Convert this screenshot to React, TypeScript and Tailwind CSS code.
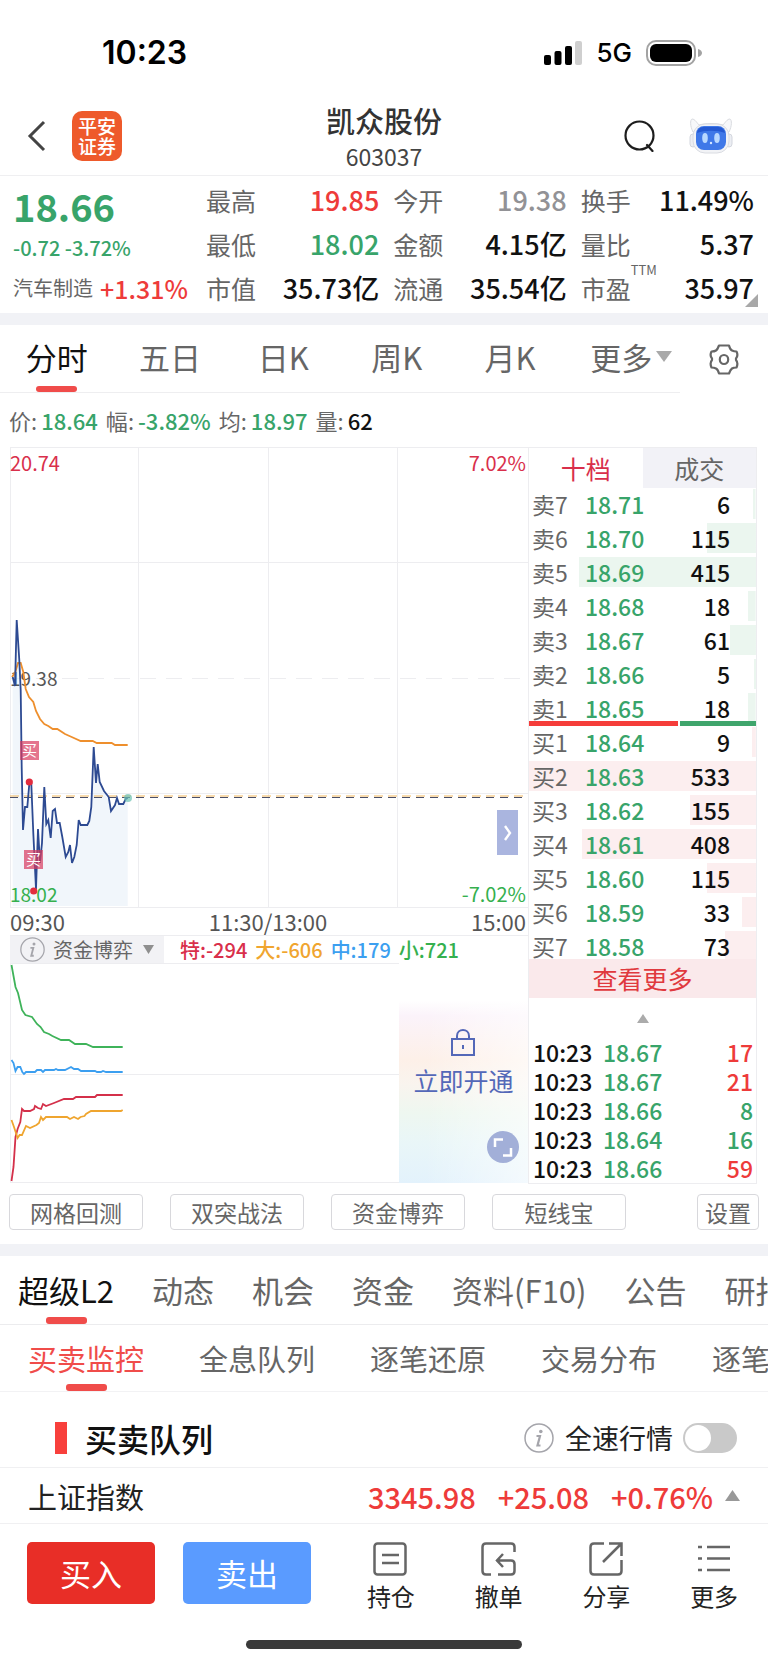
import { useState } from 'react';
import clsx from 'clsx';

const MAX_QTY = 533;

const stats = [
  { label: '最高', value: '19.85', color: 'text-[#ee3b3a]' },
  { label: '今开', value: '19.38', color: 'text-[#929296]' },
  { label: '换手', value: '11.49%', color: 'text-[#111]' },
  { label: '最低', value: '18.02', color: 'text-[#38a46a]' },
  { label: '金额', value: '4.15亿', color: 'text-[#111]' },
  { label: '量比', value: '5.37', color: 'text-[#111]' },
  { label: '市值', value: '35.73亿', color: 'text-[#111]' },
  { label: '流通', value: '35.54亿', color: 'text-[#111]' },
  { label: '市盈', value: '35.97', color: 'text-[#111]', sup: 'TTM' },
];

const periods = ['分时', '五日', '日K', '周K', '月K', '更多'];

const quote = [
  { label: '价', value: '18.64', color: 'text-[#38a46a]' },
  { label: '幅', value: '-3.82%', color: 'text-[#38a46a]' },
  { label: '均', value: '18.97', color: 'text-[#38a46a]' },
  { label: '量', value: '62', color: 'text-[#111]' },
];

const sells = [
  { name: '卖7', price: '18.71', qty: 6 },
  { name: '卖6', price: '18.70', qty: 115 },
  { name: '卖5', price: '18.69', qty: 415 },
  { name: '卖4', price: '18.68', qty: 18 },
  { name: '卖3', price: '18.67', qty: 61 },
  { name: '卖2', price: '18.66', qty: 5 },
  { name: '卖1', price: '18.65', qty: 18 },
];

const buys = [
  { name: '买1', price: '18.64', qty: 9 },
  { name: '买2', price: '18.63', qty: 533 },
  { name: '买3', price: '18.62', qty: 155 },
  { name: '买4', price: '18.61', qty: 408 },
  { name: '买5', price: '18.60', qty: 115 },
  { name: '买6', price: '18.59', qty: 33 },
  { name: '买7', price: '18.58', qty: 73 },
];

const trades = [
  { time: '10:23', price: '18.67', qty: 17, up: true },
  { time: '10:23', price: '18.67', qty: 21, up: true },
  { time: '10:23', price: '18.66', qty: 8, up: false },
  { time: '10:23', price: '18.64', qty: 16, up: false },
  { time: '10:23', price: '18.66', qty: 59, up: true },
];

const flows = [
  { text: '特:-294', color: 'text-[#d92f4b]' },
  { text: '大:-606', color: 'text-[#f0a52f]' },
  { text: '中:179', color: 'text-[#3c9ff0]' },
  { text: '小:721', color: 'text-[#35b04e]' },
];

const tools = ['网格回测', '双突战法', '资金博弈', '短线宝'];
const sections = ['超级L2', '动态', '机会', '资金', '资料(F10)', '公告', '研报'];
const subSections = ['买卖监控', '全息队列', '逐笔还原', '交易分布', '逐笔成交'];

const priceLine =
  '2.7,230 5,239 6.7,173 9.3,213 10.7,243 11.7,320 13,383 15,360 17.3,360 19.3,337 21.3,337 23.3,386 26,442 28,382 30,416 32,396 34.3,340 36.3,377 38.3,373 40.7,391 42.7,364 45,362 47,376 49.7,376 52.3,390 55.7,410 58.3,405 60,398 62,416 64.3,410 66.7,398 68.7,373 70.7,378 77.3,378 79.3,374 81.3,360 83.7,300 86,336 87.7,317 89.7,335 94,344 98.7,350 101,364 105,358 107,351 109,357 113.3,357 115.7,352 117.7,351';
const avgLine =
  '2,230 5.3,225 8,216 10.7,216 13.3,225 15.7,242 19,250 23.3,255 26,264 30,272 34.3,277 38.3,279 42.7,282 47.3,282 55,287 61.7,290 70.7,294 82.7,294 86.7,296 101.7,296 105,298 117.7,298';

const flowLines = [
  {
    color: '#3fb35a',
    points:
      '1.5,2 5.5,24 8,30 12,47 15.4,52 22,54 27,61 30.6,64 34,69 39,71 42.4,73 51,77 59,77 65,81 76,81 83,84 112.7,84',
  },
  {
    color: '#3c9ff0',
    points:
      '1.5,97 3.5,100 5.5,108 7.6,104 10.3,104 12.3,109 14,111 16,109 25,109 27,107 31,107 33,109 35,107 44,107 46,106 48,107 55,107 61,104 64,106 68,106 71,108 85,108 87,109 91,109 93,108 96,109 112.7,109',
  },
  {
    color: '#d4304a',
    points:
      '1.5,218 3.5,204 5.5,174 7.6,166 10.3,159 12,146 14,148 20,148 24,146 25,143 28,145 31,146 33,141 36,143 44,140 54,136 63,136 66,134 85,134 87,132 112.7,132',
  },
  {
    color: '#efa52f',
    points:
      '1.5,157 4,164 7.6,175 9.6,172 12,172 16,163 20,165 26.5,162 29,160 31,154 33,157 36,154 57,154 60,156 64,154 68,156 70.5,154 74.5,153 76,151 81,148 111,148 112.7,147',
  },
];

function StatusBar() {
  return (
    <div className="flex h-24 items-center justify-between pt-2.5 pr-[66px] pl-[102px] font-['Inter',sans-serif] text-black">
      <span className="text-[32px] leading-9 font-semibold">10:23</span>
      <div className="flex items-center">
        <svg width="38" height="24" viewBox="0 0 38 24">
          <rect x="0" y="14" width="7" height="10" rx="2" />
          <rect x="10.500" y="10" width="7" height="14" rx="2" />
          <rect x="21" y="5" width="7" height="19" rx="2" />
          <rect x="31" y="0" width="7" height="24" rx="2" fill="#cfcfcf" />
        </svg>
        <span className="ml-3.5 text-[26px] leading-8 font-medium">5G</span>
        <svg className="ml-3.5" width="56" height="26" viewBox="0 0 56 26">
          <rect x="1" y="1" width="48" height="24" rx="9" fill="none" stroke="#a3a3a3" strokeWidth="2" />
          <rect x="4" y="4" width="42" height="18" rx="6" />
          <path d="M52 9c3 1 4 2.500 4 4s-1 3-4 4z" fill="#a3a3a3" />
        </svg>
      </div>
    </div>
  );
}

function Header() {
  return (
    <header className="grid h-20 grid-cols-3 items-center border-b border-[#efeff1]">
      <div className="flex items-center gap-[26px] pl-[27px]">
        <button aria-label="返回">
          <svg width="19" height="32" viewBox="0 0 19 32" fill="none" stroke="#444" strokeWidth="3">
            <path d="M17 2 3 16l14 14" />
          </svg>
        </button>
        <div className="flex h-[50px] w-[50px] flex-col items-center justify-center rounded-[10px] bg-[#ee5a2b] text-[19px] leading-5 font-medium text-white">
          <span>平安</span>
          <span>证券</span>
        </div>
      </div>
      <div className="pt-1 text-center">
        <h1 className="text-[29px] leading-9 font-medium text-[#333]">凯众股份</h1>
        <p className="text-[23px] leading-9 text-[#444]">603037</p>
      </div>
      <div className="flex items-center justify-end gap-[34px] pr-[35px]">
        <button aria-label="搜索">
          <svg width="31" height="32" viewBox="0 0 31 32" fill="none" stroke="#1d1d1d" strokeWidth="2.200">
            <ellipse cx="15.500" cy="15.500" rx="14" ry="14" />
            <path d="m23 25 5.500 6" strokeLinecap="round" />
          </svg>
        </button>
        <button aria-label="智能助手">
          <svg width="44" height="36" viewBox="0 0 44 36">
            <path d="M4 14C1 8 1 2 3 1c3 0 5 4 7 6 7-2 17-2 24 0 2-2 4-6 7-6 2 1 2 7-1 13z" fill="#f7f8fa" stroke="#d9dbe0" />
            <rect x="1" y="16" width="6" height="13" rx="3" fill="#eceef3" stroke="#d3d6de" />
            <rect x="37" y="16" width="6" height="13" rx="3" fill="#eceef3" stroke="#d3d6de" />
            <rect x="4" y="6" width="36" height="29" rx="12" fill="#f2f3f6" stroke="#dadce2" />
            <rect x="7" y="8" width="30" height="24" rx="8" fill="#3f78e8" />
            <path d="M8 15c1-5 4-6 8-6h12c4 0 7 1 8 6-8-3-20-3-28 0z" fill="#2459d2" />
            <ellipse cx="16" cy="20" rx="2.800" ry="5" fill="#b9d8ff" />
            <ellipse cx="28" cy="20" rx="2.800" ry="5" fill="#b9d8ff" />
            <circle cx="22" cy="25" r="1.200" fill="#d8e8ff" />
          </svg>
        </button>
      </div>
    </header>
  );
}

function Summary() {
  return (
    <section className="relative flex h-[137px] pr-[14px] pl-[13px]">
      <div className="w-[193px] shrink-0">
        <p className="pt-1.5 text-[38px] leading-[48px] font-bold text-[#38a46a]">18.66</p>
        <p className="text-[20px] leading-9 font-medium text-[#38a46a]">-0.72 -3.72%</p>
        <p className="flex items-center gap-[7px] text-[20px] leading-[44px] text-[#666]">
          汽车制造
          <span className="text-[25px] font-medium text-[#ee3b3a]">+1.31%</span>
        </p>
      </div>
      <dl className="grid flex-1 grid-cols-3 content-start gap-x-[14px] pt-0.5">
        {stats.map((s) => (
          <div key={s.label} className="flex h-11 items-center justify-between">
            <dt className="relative text-[25px] leading-10 text-[#666]">
              {s.label}
              {s.sup && <sup className="absolute -top-1.5 left-full text-[13px] leading-4">{s.sup}</sup>}
            </dt>
            <dd className={clsx('text-[27px] leading-10 font-medium', s.color)}>{s.value}</dd>
          </div>
        ))}
      </dl>
      <svg className="absolute right-[10px] bottom-1.5" width="13" height="13" viewBox="0 0 13 13">
        <path d="M13 0v13H0z" fill="#a8a8a8" />
      </svg>
    </section>
  );
}

function Periods() {
  const [active, setActive] = useState('分时');
  return (
    <nav className="flex h-[68px]">
      <div className="grid flex-1 grid-cols-6 border-b border-[#eeeef0]">
        {periods.map((p) => (
          <button
            key={p}
            onClick={() => setActive(p)}
            className={clsx(
              'relative flex items-center justify-center pb-1 text-[31px] leading-10',
              p === active ? 'text-[#111]' : 'text-[#666]'
            )}
          >
            {p}
            {p === '更多' && (
              <svg className="-mr-4 ml-1" width="16" height="11" viewBox="0 0 16 11">
                <path d="M0 0h16L8 11z" fill="#a9a9a9" />
              </svg>
            )}
            {p === active && <span className="absolute bottom-0 h-1.5 w-[41px] rounded-[3px] bg-[#f04c4a]" />}
          </button>
        ))}
      </div>
      <button aria-label="图表设置" className="flex w-[88px] items-center justify-center">
        <svg width="30" height="31" viewBox="0 0 30 31" fill="none" stroke="#666" strokeWidth="2.200" strokeLinejoin="round">
          <path d="M10 1.500h10q1 4 3 5t4.500 1q2 4-.5 7 0 1 0 1.500 2.500 3 .5 7.500-3 0-4.500 1t-3 5H10q-1-4-3-5T2.500 23.500q-2-4.500.5-7.500 0-1 0-1.500-2.500-3-.5-7Q5.500 7.500 7 6.500t3-5z" />
          <ellipse cx="15" cy="15.500" rx="4.200" ry="4.500" />
        </svg>
      </button>
    </nav>
  );
}

function PriceChart() {
  return (
    <div className="relative text-[20px] leading-7">
      <svg className="block h-[461px] w-full" viewBox="0 0 518 461" preserveAspectRatio="none" fill="none">
        <g stroke="#ededf0">
          <path d="M0 .5h518M0 115.500h518M0 346.500h518M0 460.500h518" />
          <path d="M.5 0v461M128.500 0v461M258.500 0v461M387.500 0v461" />
          <path d="M0 231.500h518" strokeDasharray="16 10" />
        </g>
        <polygon points={`2.7,459 ${priceLine} 117.7,459`} fill="#e4eef7" fillOpacity="0.500" />
        <text x="0" y="239" fontSize="19" fill="#555" fontFamily="Noto Sans CJK SC">19.38</text>
        <polyline points={avgLine} stroke="#ee8f2d" strokeWidth="1.800" />
        <path d="M0 349h518" stroke="#f0b65c" strokeWidth="1" strokeDasharray="9 5" />
        <path d="M0 350.500h518" stroke="#4a4f68" strokeWidth="1.200" strokeDasharray="8 6" />
        <polyline points={priceLine} stroke="#2d4a92" strokeWidth="1.800" />
        <text x="0" y="455" fontSize="19" fill="#35b04e" fontFamily="Noto Sans CJK SC">18.02</text>
        <circle cx="118" cy="351" r="4" fill="#6cc2b4" fillOpacity="0.700" />
        <g fill="#d93a5e" fillOpacity="0.700">
          <rect x="10" y="294" width="19" height="19" />
          <rect x="14" y="403" width="19" height="19" />
        </g>
        <g fill="#fff" fontSize="15" fontFamily="Noto Sans CJK SC">
          <text x="12" y="309">买</text>
          <text x="16" y="418">买</text>
        </g>
        <circle cx="19.300" cy="335" r="3.600" fill="#e22c3e" />
        <circle cx="23.700" cy="444" r="3.600" fill="#e22c3e" />
      </svg>
      <span className="absolute top-0.5 left-0 text-[#d92f4b]">20.74</span>
      <span className="absolute top-0.5 right-0.5 text-[#d92f4b]">7.02%</span>
      <span className="absolute right-0.5 bottom-0 text-[#35b04e]">-7.02%</span>
      <button
        aria-label="展开"
        className="absolute right-[10px] bottom-[53px] flex h-[45px] w-[21px] items-center justify-center bg-[#aab5df]"
      >
        <svg width="8" height="16" viewBox="0 0 8 16" fill="none" stroke="#fff" strokeWidth="2.400">
          <path d="m1 1 5 7-5 7" />
        </svg>
      </button>
    </div>
  );
}

function FlowChart() {
  return (
    <div className="relative">
      <svg className="block h-[220px] w-full" viewBox="0 0 518 220" preserveAspectRatio="none" fill="none">
        <path d="M0 .5h518M0 111.500h518M0 219.500h518M.5 0v220" stroke="#ededf0" />
        {flowLines.map((l) => (
          <polyline key={l.color} points={l.points} stroke={l.color} strokeWidth="1.800" />
        ))}
      </svg>
      <div className="absolute top-0 right-0 bottom-0 flex w-[129px] flex-col items-center bg-white bg-[linear-gradient(90deg,transparent_0%,transparent_20%,rgba(255,255,255,0.6)_100%),linear-gradient(180deg,#ffffff_0%,#ffffff_17%,#fbf3fa_24%,#fdf0e8_44%,#f9f4ee_55%,#eef7f0_68%,#e9f6f8_82%,#e3f2fc_100%)] pt-[65px]">
        <button className="flex flex-col items-center text-[25px] leading-9 text-[#5468b8]">
          <svg width="26" height="28" viewBox="0 0 26 28" fill="none" stroke="#5468b8" strokeWidth="2">
            <path d="M2 11h22v16H2zM7 11V8c0-8 12-8 12 0v3M13 17v4" />
          </svg>
          <span className="mt-1.5">立即开通</span>
        </button>
        <button aria-label="全屏" className="absolute right-[9px] bottom-5">
          <svg width="32" height="32" viewBox="0 0 32 32">
            <circle cx="16" cy="16" r="16" fill="#a2afd8" />
            <path d="M8 16V8.500h8M16 24.500h8V17" fill="none" stroke="#fff" strokeWidth="2.500" />
          </svg>
        </button>
      </div>
    </div>
  );
}

function DepthTable({ rows, color }: { rows: typeof sells; color: string }) {
  return (
    <table className="w-full table-fixed text-[23px] leading-8">
      <tbody>
        {rows.map((r) => (
          <tr
            key={r.name}
            className="h-[34px] bg-right bg-no-repeat"
            style={{
              backgroundImage: `linear-gradient(${color}, ${color})`,
              backgroundSize: `${(r.qty / MAX_QTY) * 100}% 30px`,
            }}
          >
            <th className="w-14 p-0 pl-[3px] text-left font-normal text-[#666]">{r.name}</th>
            <td className="p-0 font-medium text-[#38a46a]">{r.price}</td>
            <td className="p-0 pr-[26px] text-right font-medium text-[#111]">{r.qty}</td>
          </tr>
        ))}
      </tbody>
    </table>
  );
}

function OrderBook() {
  const [tab, setTab] = useState('十档');
  return (
    <aside className="w-[229px] shrink-0 border border-[#ededf0]">
      <div className="grid h-[39px] grid-cols-2">
        {['十档', '成交'].map((t) => (
          <button
            key={t}
            onClick={() => setTab(t)}
            className={clsx('text-[25px] leading-10', t === tab ? 'text-[#d92f4b]' : 'bg-[#f2f2f7] text-[#666]')}
          >
            {t}
          </button>
        ))}
      </div>
      <DepthTable rows={sells} color="#ebf6ef" />
      <div className="relative -mt-1 -mb-px flex h-[5px] gap-0.5">
        <div className="w-[450px] shrink bg-[#f53d3a]" />
        <div className="w-[230px] shrink bg-[#3fa56c]" />
      </div>
      <DepthTable rows={buys} color="#fceeef" />
      <button className="relative -mt-1 block h-[39px] w-full bg-[#fae9eb] text-[25px] leading-[39px] text-[#e0393e]">
        查看更多
      </button>
      <div className="flex h-10 items-center justify-center">
        <svg width="12" height="9" viewBox="0 0 12 9">
          <path d="M6 0l6 9H0z" fill="#ababab" />
        </svg>
      </div>
      <table className="w-full table-fixed text-[23px] leading-[29px] font-medium">
        <tbody>
          {trades.map((t, i) => (
            <tr key={i} className="h-[29px]">
              <td className="w-[74px] p-0 pl-1 text-[#111]">{t.time}</td>
              <td className="p-0 text-[#38a46a]">{t.price}</td>
              <td className={clsx('p-0 pr-[3px] text-right', t.up ? 'text-[#ee3b3a]' : 'text-[#38a46a]')}>{t.qty}</td>
            </tr>
          ))}
        </tbody>
      </table>
    </aside>
  );
}

function Market() {
  return (
    <section>
      <div className="flex h-[54px] items-center gap-2 pl-[9px] text-[22px] leading-8">
        {quote.map((q) => (
          <span key={q.label} className="text-[#666]">
            {q.label}:<span className={clsx('ml-1 font-medium', q.color)}>{q.value}</span>
          </span>
        ))}
      </div>
      <div className="flex pr-[11px] pl-[10px]">
        <div className="min-w-0 flex-1">
          <PriceChart />
          <div className="grid h-[27px] grid-cols-3 pr-0.5 text-[22px] leading-[27px] text-[#555]">
            <span>09:30</span>
            <span className="text-center">11:30/13:00</span>
            <span className="text-right">15:00</span>
          </div>
          <div className="flex h-7 items-center border-t border-[#ededf0] text-[20px] leading-7">
            <button className="flex h-full w-[154px] items-center bg-[#f2f2f5] pl-[10px] text-[#666]">
              <InfoIcon size={25} />
              <span className="ml-2">资金博弈</span>
              <svg className="ml-2.5" width="11" height="9" viewBox="0 0 11 9">
                <path d="M0 0h11L5.500 9z" fill="#8f8f8f" />
              </svg>
            </button>
            <div className="flex gap-2 pl-4 font-medium">
              {flows.map((f) => (
                <span key={f.text} className={f.color}>{f.text}</span>
              ))}
            </div>
          </div>
          <FlowChart />
        </div>
        <OrderBook />
      </div>
      <div className="flex gap-[27px] pt-[10px] pr-[9px] pb-[14px] pl-[9px] text-[23px] leading-[34px] text-[#666]">
        {tools.map((t) => (
          <button key={t} className="h-9 flex-1 rounded border border-[#d8d8dc]">{t}</button>
        ))}
        <button className="ml-11 h-9 w-[62px] rounded border border-[#d8d8dc]">设置</button>
      </div>
    </section>
  );
}

function InfoIcon({ size }: { size: number }) {
  return (
    <svg width={size} height={size} viewBox="0 0 30 30" fill="none" stroke="#a5a5ab">
      <circle cx="15" cy="15" r="14" strokeWidth="1.500" />
      <circle cx="16.800" cy="8.500" r="1.800" fill="#a5a5ab" stroke="none" />
      <path d="M12.500 13h3.500l-2.500 9.500h3" strokeWidth="2.200" />
    </svg>
  );
}

function Sections() {
  const [section, setSection] = useState('超级L2');
  const [sub, setSub] = useState('买卖监控');
  return (
    <section>
      <nav className="flex h-[69px] gap-[38px] overflow-hidden border-b border-[#ececee] pl-[18px] text-[31px] leading-10 whitespace-nowrap">
        {sections.map((s) => (
          <button
            key={s}
            onClick={() => setSection(s)}
            className={clsx('relative shrink-0', s === section ? 'text-[#111]' : 'text-[#666]')}
          >
            {s}
            {s === section && (
              <span className="absolute bottom-0 left-1/2 -ml-5 h-[7px] w-[41px] rounded-[3px] bg-[#f04c4a]" />
            )}
          </button>
        ))}
      </nav>
      <nav className="flex h-[67px] gap-[55px] overflow-hidden border-b border-[#f2f2f4] pl-7 text-[29px] leading-10 whitespace-nowrap">
        {subSections.map((s) => (
          <button
            key={s}
            onClick={() => setSub(s)}
            className={clsx('relative shrink-0', s === sub ? 'text-[#f04c4a]' : 'text-[#666]')}
          >
            {s}
            {s === sub && (
              <span className="absolute bottom-0 left-1/2 -ml-5 h-[7px] w-[41px] rounded-[3px] bg-[#f04c4a]" />
            )}
          </button>
        ))}
      </nav>
      <div className="flex h-[75px] items-center pt-4 pr-[31px] pl-[55px]">
        <span className="h-8 w-3 bg-[#f8403c]" />
        <h2 className="ml-[18px] text-[32px] leading-10 font-medium text-[#111]">买卖队列</h2>
        <div className="ml-auto flex items-center">
          <InfoIcon size={30} />
          <label htmlFor="fast" className="mr-[10px] ml-[11px] text-[27px] leading-10 text-[#222]">
            全速行情
          </label>
          <input
            id="fast"
            type="checkbox"
            className="relative h-[30px] w-[54px] appearance-none rounded-full bg-[#c9c9c9] before:absolute before:top-0.5 before:left-0.5 before:h-[26px] before:w-[26px] before:rounded-full before:bg-white checked:bg-[#f04c4a] checked:before:left-[26px]"
          />
        </div>
      </div>
    </section>
  );
}

function Footer() {
  return (
    <footer>
      <div className="flex h-[57px] items-center border-y border-[#f0f0f2] pr-7 pl-7 leading-10">
        <span className="text-[29px] text-[#222]">上证指数</span>
        <div className="ml-auto flex items-center gap-[22px] text-[29px] font-medium text-[#ee3b3a]">
          <span>3345.98</span>
          <span>+25.08</span>
          <span>+0.76%</span>
        </div>
        <svg className="ml-3" width="15" height="11" viewBox="0 0 15 11">
          <path d="M7.500 0 15 11H0z" fill="#999" />
        </svg>
      </div>
      <div className="flex items-start pt-[18px] pl-[27px]">
        <button className="h-[62px] w-32 rounded-[5px] bg-[#e82e27] text-[31px] leading-[62px] text-white">买入</button>
        <button className="ml-7 h-[62px] w-32 rounded-[5px] bg-[#5a9bff] text-[31px] leading-[62px] text-white">
          卖出
        </button>
        <div className="ml-[26px] grid flex-1 grid-cols-4 text-[24px] leading-8 text-[#222]">
          <Action label="持仓">
            <rect x="1.500" y="1.500" width="31" height="31" rx="3" />
            <path d="M9 13h17M9 21h17" />
          </Action>
          <Action label="撤单">
            <path d="M33.500 10V5q0-3.500-3.500-3.500H5Q1.500 1.500 1.500 5v24q0 3.500 3.500 3.500h5M17 32.500h13q3.500 0 3.500-3.500v-7q0-3.500-3.500-3.500H17M22 12l-6 6.500 6 6.500" />
          </Action>
          <Action label="分享">
            <path d="M15 1.500H5Q1.500 1.500 1.500 5v24q0 3.500 3.500 3.500h24q3.500 0 3.500-3.500V18M20 1.500h12.500V14M32 2 14 20" />
          </Action>
          <Action label="更多">
            <path d="M10 5h23M10 16.500h23M10 28h23M1 5h4M1 16.500h4M1 28h4" />
          </Action>
        </div>
      </div>
      <div className="mt-7 flex justify-center pb-4">
        <div className="h-[9px] w-[276px] rounded-full bg-[#3a3a3a]" />
      </div>
    </footer>
  );
}

function Action({ label, children }: { label: string; children: React.ReactNode }) {
  return (
    <button className="flex flex-col items-center">
      <svg width="35" height="34" viewBox="0 0 35 34" fill="none" stroke="#666" strokeWidth="2.500">
        {children}
      </svg>
      <span className="mt-1">{label}</span>
    </button>
  );
}

export default function App() {
  return (
    <main className="w-full overflow-hidden bg-white font-['Noto_Sans_CJK_SC',sans-serif]">
      <StatusBar />
      <Header />
      <Summary />
      <div className="h-3 bg-[#f1f2f6]" />
      <Periods />
      <Market />
      <div className="h-3 bg-[#f1f2f6]" />
      <Sections />
      <Footer />
    </main>
  );
}
